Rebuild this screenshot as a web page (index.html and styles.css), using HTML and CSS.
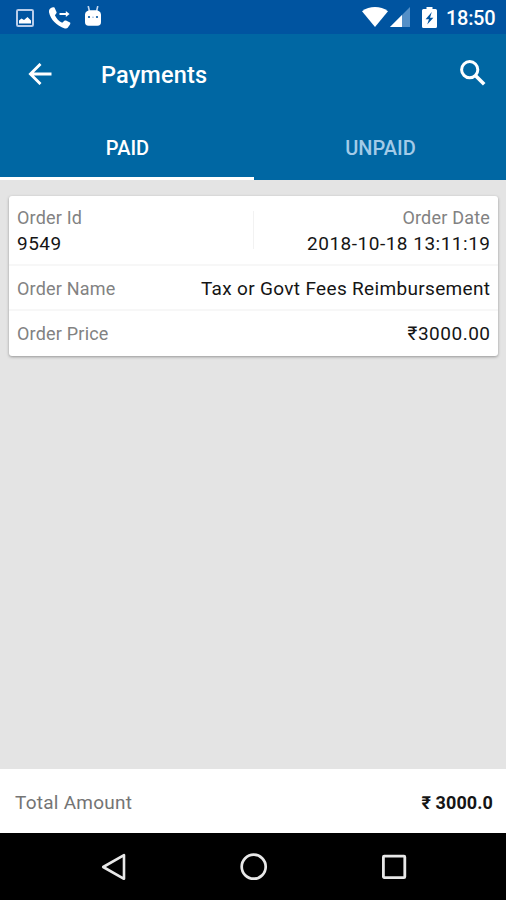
FILE: index.html
```
<!DOCTYPE html>
<html lang="en">
<head>
<meta charset="utf-8">
<title>Payments</title>
<link rel="stylesheet" href="styles.css">
</head>
<body>
<div class="screen">
  <div class="status">
    <svg class="ic-image" width="18" height="18" viewBox="0 0 18 18"><rect x="1" y="1" width="16" height="16" rx="1.2" fill="none" stroke="#b9cdea" stroke-width="2"/><path d="M3 14.5V11.5L5.5 9.5L8 11L11.5 8L15 11.5V14.5Z" fill="#fff"/></svg>
    <svg class="ic-call" width="22" height="22" viewBox="0 0 22 22"><path d="M1.2 1.4C3 .2 5 0 5.6.7L7.6 5.2C7.8 6 7.4 6.6 5.9 8.3C7.3 11.6 10 14.3 13.2 15.8L15.4 13.7C16 13.3 16.5 13.4 17 13.6L21 15.6C21.5 16 21.4 16.7 21 17.5L18.7 20.8C18 21.6 17 21.7 15.8 21.4C7.5 19 1.6 12.5 0 5.3C-.2 3.5.2 2.3 1.2 1.4Z" fill="#fff"/><path d="M10.5 7H19" stroke="#fff" stroke-width="2"/><path d="M16.8 4L20.6 7L16.8 10Z" fill="#fff"/></svg>
    <svg class="ic-robot" width="18" height="21" viewBox="0 0 18 21"><path d="M4.2 0L5.4 5M13.8 0L12.6 5" stroke="#c8daf0" stroke-width="1.6"/><path d="M1 8.2C1.5 5.4 4 4.3 6 4.3H12C14 4.3 16.5 5.4 17 8.2V16C17 18.5 15.8 19.8 13.5 19.8H4.5C2.2 19.8 1 18.5 1 16Z" fill="#fff"/><circle cx="5" cy="11" r="1.1" fill="#0054a0"/><circle cx="13" cy="11" r="1.1" fill="#0054a0"/><path d="M8 11.2H10" stroke="#9dbce0"/></svg>
    <span class="spacer"></span>
    <svg class="ic-wifi" width="26" height="20" viewBox="0 0 26 20"><path d="M0 4.2C7.5-1.3 18.5-1.3 26 4.2L13 20Z" fill="#fff"/></svg>
    <svg class="ic-signal" width="20" height="20" viewBox="0 0 20 20"><path d="M0 20L20 0V20Z" fill="#548fc7"/><path d="M0 20L12 8V20Z" fill="#fff"/></svg>
    <svg class="ic-battery" width="15" height="21" viewBox="0 0 15 21"><path d="M4.5 0H10.5V2H13.5Q15 2 15 3.5V19.5Q15 21 13.5 21H1.5Q0 21 0 19.5V3.5Q0 2 1.5 2H4.5Z" fill="#fff"/><path d="M9.8 5L3.6 12.2H7L5.2 17.5L11.4 10.7H8Z" fill="#0054a0"/></svg>
    <span class="clock">18:50</span>
  </div>
  <div class="appbar">
    <svg class="ic-back" width="24" height="22" viewBox="0 0 24 22"><path d="M23.5 11H2.2M12.5.9L2.4 11L12.5 21.1" fill="none" stroke="#fff" stroke-width="2.8"/></svg>
    <h1 class="title">Payments</h1>
    <svg class="ic-search" width="26" height="26" viewBox="0 0 26 26"><circle cx="9.7" cy="9.7" r="8.1" fill="none" stroke="#fff" stroke-width="3"/><path d="M15.4 15.4L24.2 24.2" stroke="#fff" stroke-width="3.6"/></svg>
  </div>
  <div class="tabs">
    <div class="tab active">PAID</div>
    <div class="tab">UNPAID</div>
  </div>
  <div class="content">
    <div class="card">
      <div class="top">
        <div class="cell"><span class="label">Order Id</span><span class="value">9549</span></div>
        <div class="cell right"><span class="label">Order Date</span><span class="value">2018-10-18 13:11:19</span></div>
      </div>
      <div class="row"><span class="label">Order Name</span><span class="value order-name">Tax or Govt Fees Reimbursement</span></div>
      <div class="row"><span class="label">Order Price</span><span class="value">₹3000.00</span></div>
    </div>
  </div>
  <div class="total"><span class="total-label">Total Amount</span><span class="total-value">₹ 3000.0</span></div>
  <div class="nav">
    <svg width="28" height="28" viewBox="0 0 28 28"><path d="M24 2.2V25.8L3.2 14Z" fill="none" stroke="#e8e8e8" stroke-width="2.6" stroke-linejoin="round"/></svg>
    <svg width="28" height="28" viewBox="0 0 28 28"><circle cx="13.7" cy="13.7" r="12" fill="none" stroke="#e8e8e8" stroke-width="2.7"/></svg>
    <svg width="28" height="28" viewBox="0 0 28 28"><rect x="3.4" y="3.2" width="21.4" height="21.4" rx=".8" fill="none" stroke="#e8e8e8" stroke-width="2.8"/></svg>
  </div>
</div>
</body>
</html>
```
FILE: styles.css
```
* { box-sizing: border-box; }
body { margin: 0; font-family: Roboto, "Noto Sans", sans-serif; }
svg { display: block; flex: none; }
span, h1 { white-space: nowrap; }
.screen { width: 506px; height: 900px; display: flex; flex-direction: column; background: #e4e4e4; overflow: hidden; }
.status { height: 34px; flex: none; display: flex; align-items: flex-start; padding: 0 10px 0 16px; background: #0054a0; color: #fff; }
.ic-image { margin-top: 9px; }
.ic-call { margin: 7px 0 0 15px; }
.ic-robot { margin: 6px 0 0 13px; }
.spacer { flex: 1; }
.ic-wifi { margin-top: 7px; }
.ic-signal { margin: 7px 0 0 2px; }
.ic-battery { margin: 7px 9px 0 12px; }
.clock { width: 50px; font-size: 20px; font-weight: 500; line-height: 36px; letter-spacing: -0.3px; }
.appbar { height: 80px; flex: none; display: flex; align-items: center; padding: 0 20px 0 28px; background: #0067a3; color: #fff; }
.title { flex: 1; margin: 2px 0 0 49px; font-size: 23.5px; font-weight: 500; line-height: 30px; letter-spacing: 0.15px; }
.ic-search { margin-top: -2px; }
.tabs { height: 66px; flex: none; display: flex; background: #0067a3; }
.tab { flex: 1; display: flex; justify-content: center; align-items: center; padding: 4px 0 0 1px; border-bottom: 2px solid #0067a3; color: #a3cbe8; font-size: 20px; font-weight: 500; }
.tab.active { flex: 0 0 254px; color: #fff; border-bottom: 3px solid #fff; }
.content { flex: 1; padding: 16px 8px 0 9px; }
.card { height: 160px; background: #fff; border-radius: 3px; box-shadow: 0 1px 3px rgba(0,0,0,.35); }
.top { height: 68px; display: flex; padding: 9px 8px 0; }
.cell { flex: 1; display: flex; flex-direction: column; align-items: flex-start; height: 52px; }
.cell.right { flex: 0 0 237px; align-items: flex-end; background: linear-gradient(#f2f2f2, #f2f2f2) left 6px / 1px 38px no-repeat; }
.label { font-size: 18px; line-height: 26px; letter-spacing: 0.2px; color: #828282; }
.value { font-size: 19px; line-height: 26px; letter-spacing: 0.5px; margin-right: -0.5px; color: #151515; }
.order-name { letter-spacing: 0.33px; margin-right: -0.33px; }
.row { height: 45px; display: flex; justify-content: space-between; align-items: center; padding: 2px 8px 0; border-top: 2px solid #f7f7f7; }
.total { height: 64px; flex: none; display: flex; justify-content: space-between; align-items: center; padding: 2px 13px 0 15px; background: #fff; }
.total-label { font-size: 19px; letter-spacing: 0.25px; color: #747474; }
.total-value { font-size: 18px; font-weight: 700; letter-spacing: 0.1px; color: #151515; }
.nav { height: 67px; flex: none; display: flex; justify-content: space-between; align-items: center; padding: 0 98px 0 100px; background: #000; }
```
